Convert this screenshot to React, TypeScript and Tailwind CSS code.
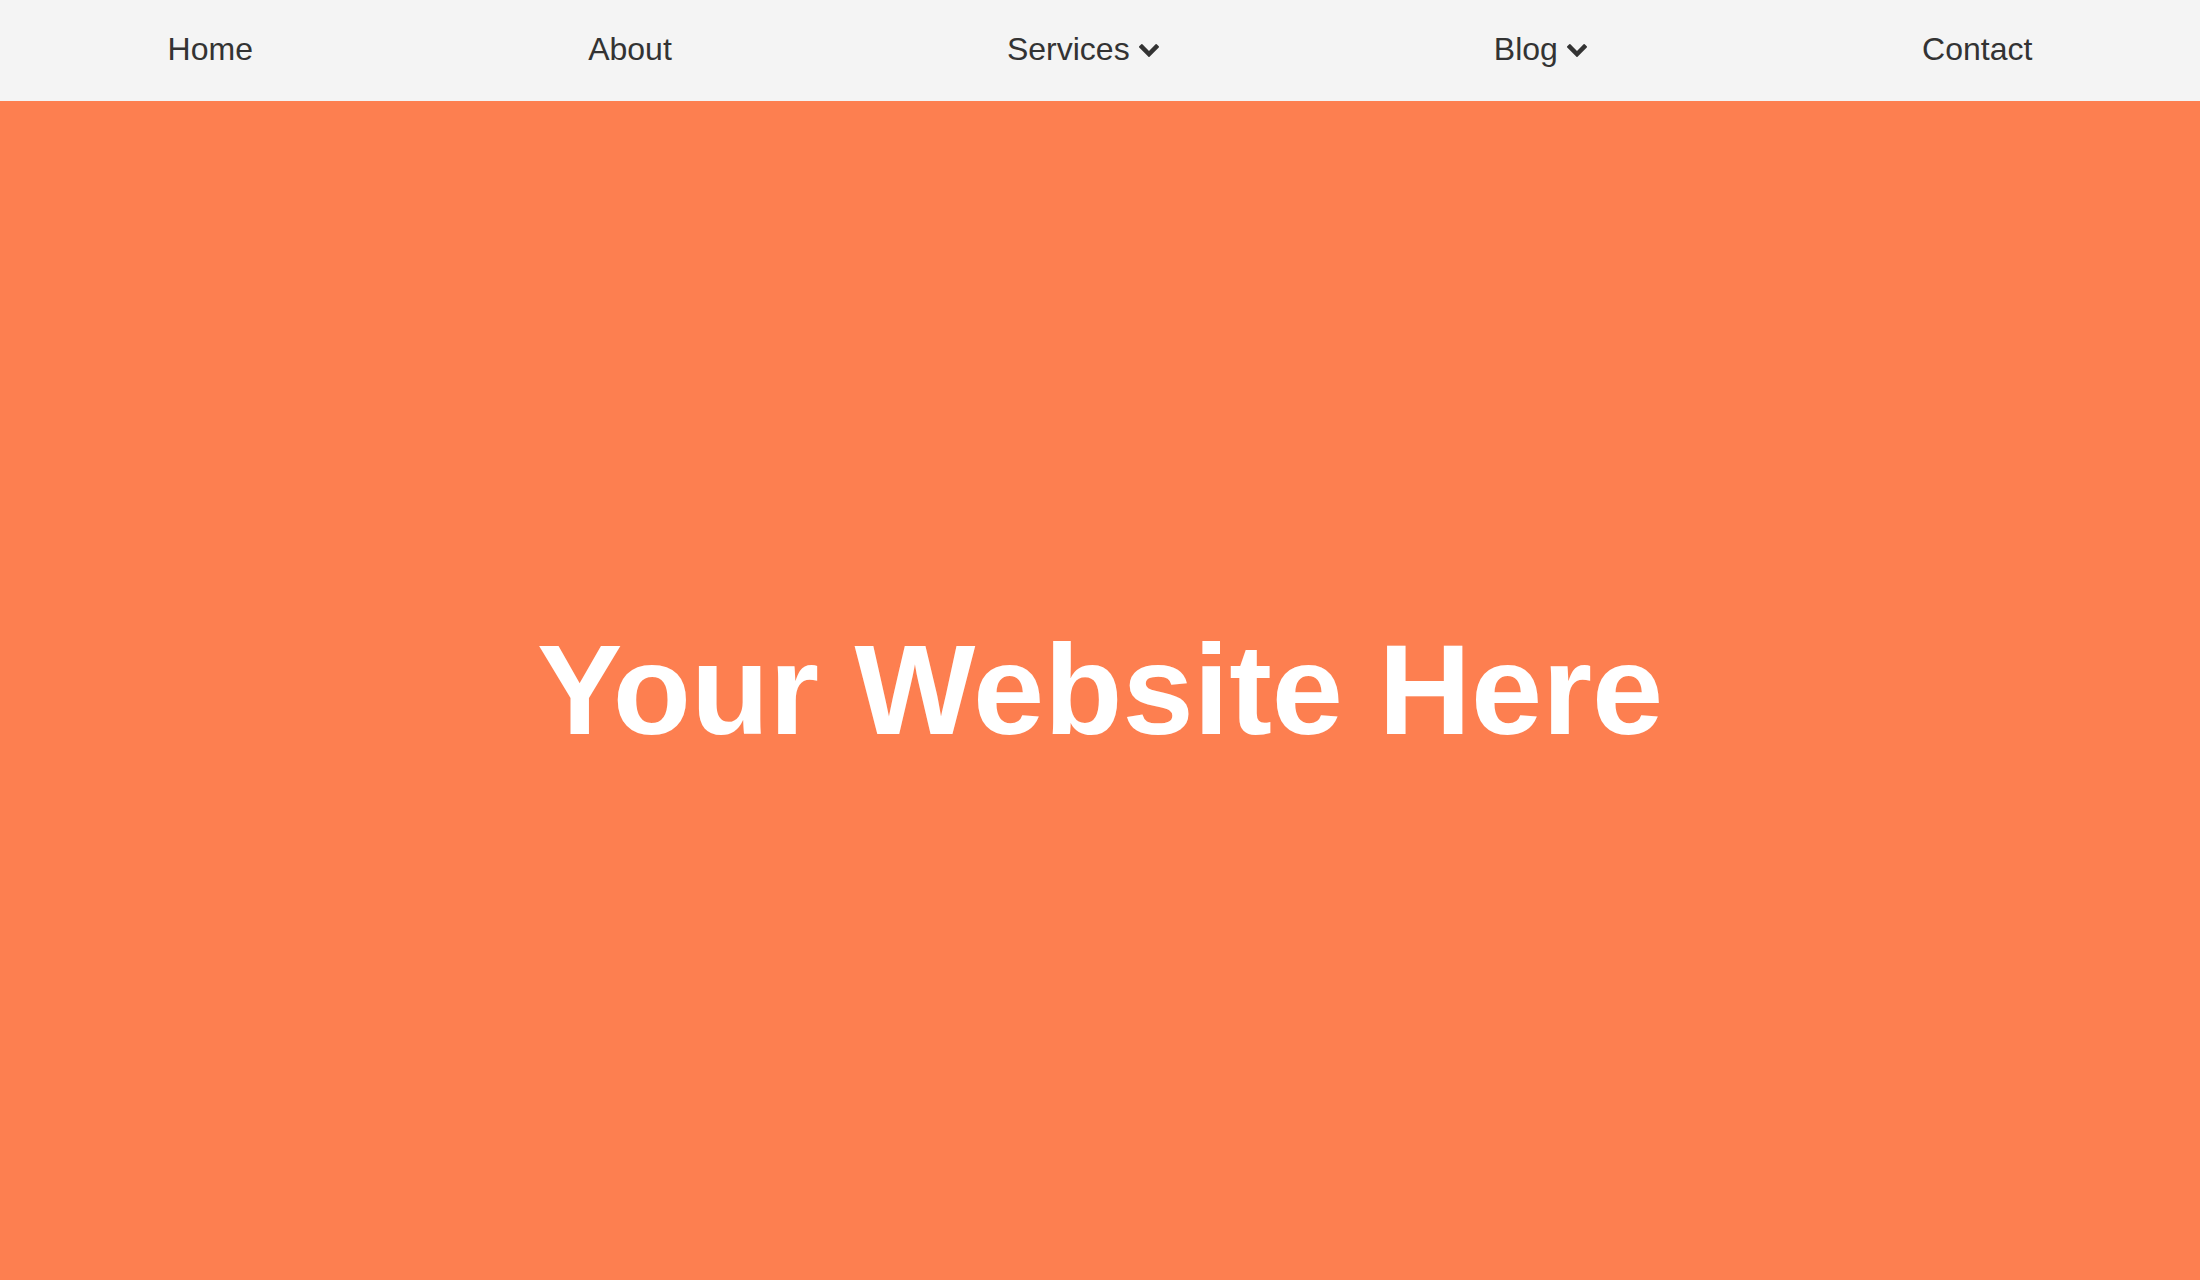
import React from 'react';

const navItems = [
  { label: 'Home', dropdown: false },
  { label: 'About', dropdown: false },
  { label: 'Services', dropdown: true },
  { label: 'Blog', dropdown: true },
  { label: 'Contact', dropdown: false },
];

// font-awesome 4 style chevron
const Chevron = () => (
  <svg width="20" height="13" viewBox="90 533 1612 1035" fill="currentColor" className="ml-[9px] mt-[3px]">
    <path d="M1683 808l-742 741q-19 19-45 19t-45-19l-742-741q-19-19-19-45.5t19-45.5l166-165q19-19 45-19t45 19l531 531 531-531q19-19 45-19t45 19l166 165q19 19 19 45.5t-19 45.5z" />
  </svg>
);

const App: React.FC = () => {
  return (
    <div className="h-screen flex flex-col font-['Liberation_Sans',Arial,sans-serif]">
      <nav className="h-[101px] bg-[#f4f4f4] flex items-center justify-around shrink-0 pb-[3px]">
        {navItems.map((item) => (
          <a key={item.label} href="#" className="flex items-center text-[32px] text-[#333] leading-none">
            {item.label}
            {item.dropdown && <Chevron />}
          </a>
        ))}
      </nav>

      <section className="flex-1 bg-[#fd7f50] flex items-center justify-center pb-[2px]">
        <h1 className="text-[128px] font-bold text-white leading-none">Your Website Here</h1>
      </section>
    </div>
  );
};

export default App;
